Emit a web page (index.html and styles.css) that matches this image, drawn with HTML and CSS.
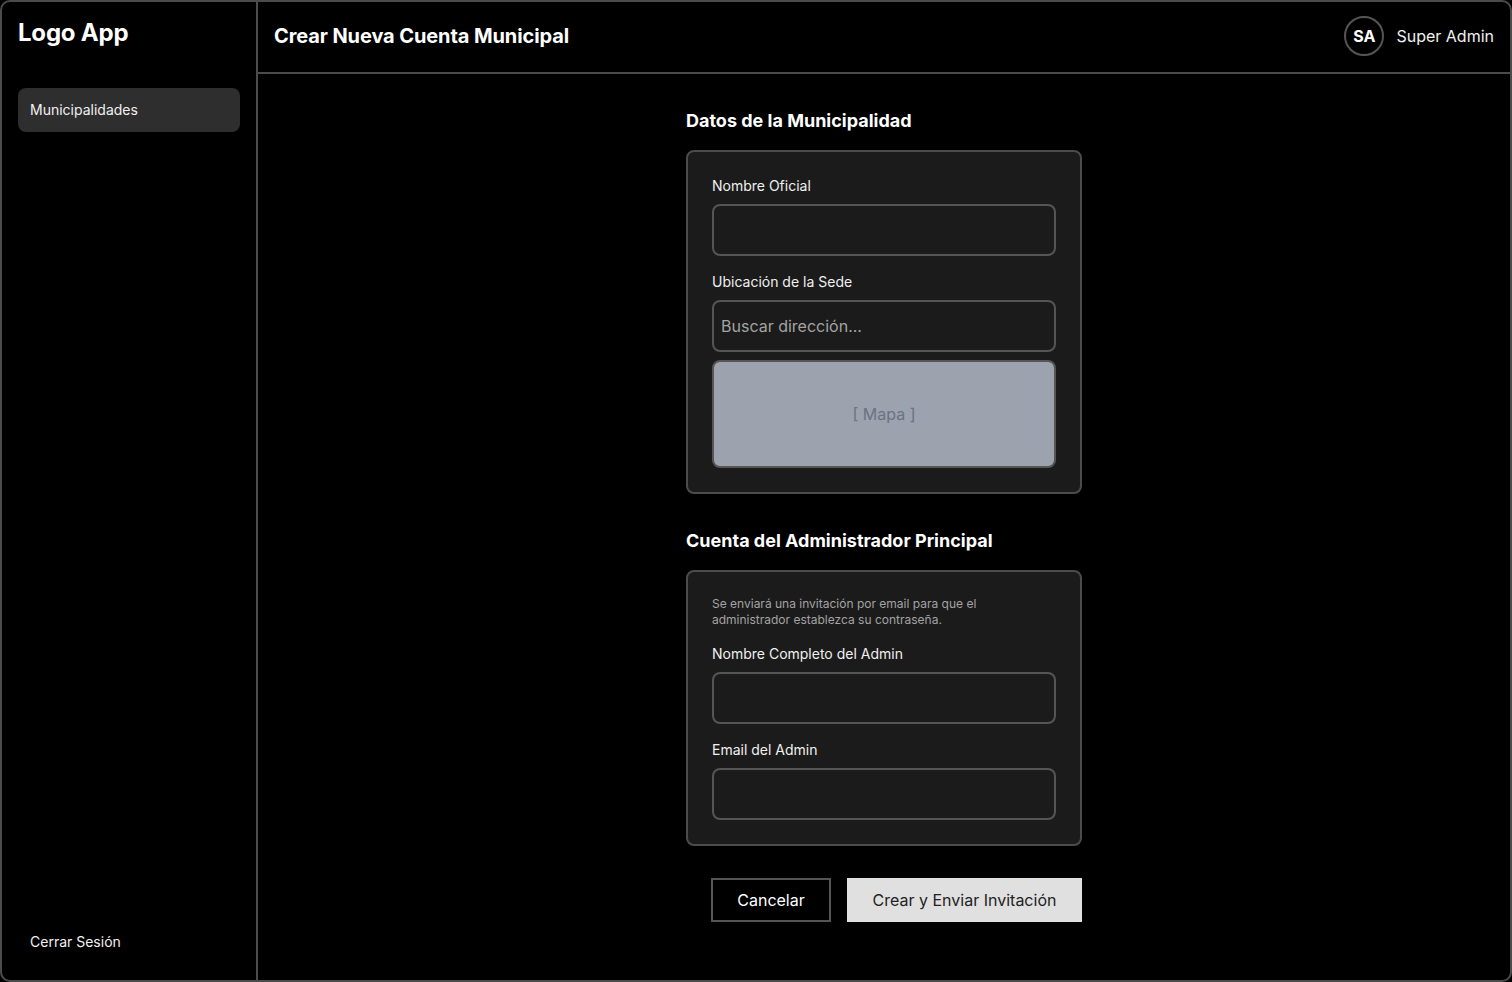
FILE: index.html
```html
<!DOCTYPE html>
<html lang="es">
<head>
<meta charset="utf-8">
<title>Crear Nueva Cuenta Municipal</title>
<link rel="stylesheet" href="styles.css">
</head>
<body>
<div class="app">
  <aside class="sidebar">
    <div class="logo">Logo App</div>
    <nav class="nav">
      <a class="nav-item active">Municipalidades</a>
    </nav>
    <a class="logout">Cerrar Sesión</a>
  </aside>
  <div class="main">
    <header class="header">
      <h1 class="title">Crear Nueva Cuenta Municipal</h1>
      <div class="user">
        <div class="avatar">SA</div>
        <span class="user-name">Super Admin</span>
      </div>
    </header>
    <section class="content">
      <form class="form">
        <h2 class="section-title">Datos de la Municipalidad</h2>
        <div class="card">
          <div class="field">
            <label class="label">Nombre Oficial</label>
            <div class="input"></div>
          </div>
          <div class="field">
            <label class="label">Ubicación de la Sede</label>
            <div class="input"><span class="placeholder">Buscar dirección...</span></div>
            <div class="map">[ Mapa ]</div>
          </div>
        </div>

        <h2 class="section-title second">Cuenta del Administrador Principal</h2>
        <div class="card">
          <p class="hint">Se enviará una invitación por email para que el<br>administrador establezca su contraseña.</p>
          <div class="field">
            <label class="label">Nombre Completo del Admin</label>
            <div class="input"></div>
          </div>
          <div class="field">
            <label class="label">Email del Admin</label>
            <div class="input"></div>
          </div>
        </div>

        <div class="actions">
          <button type="button" class="btn btn-secondary">Cancelar</button>
          <button type="button" class="btn btn-primary">Crear y Enviar Invitación</button>
        </div>
      </form>
    </section>
  </div>
</div>
</body>
</html>
```

FILE: styles.css
```css
* { box-sizing: border-box; }

html, body {
  margin: 0;
  padding: 0;
  background: #000;
}

body {
  font-family: Inter, "Noto Sans", sans-serif;
  color: #fff;
}

.app {
  width: 1512px;
  height: 982px;
  border: 2px solid #4b4b4b;
  border-radius: 10px;
  display: flex;
  overflow: hidden;
  background: #000;
}

/* Sidebar */
.sidebar {
  width: 256px;
  flex: 0 0 256px;
  border-right: 2px solid #4b4b4b;
  padding: 16px 16px 29px 16px;
  display: flex;
  flex-direction: column;
}

.logo {
  font-size: 24px;
  font-weight: 700;
  line-height: 30px;
  letter-spacing: -0.2px;
}

.nav {
  margin-top: 40px;
  flex: 1;
}

.nav-item {
  display: flex;
  align-items: center;
  height: 44px;
  padding: 0 12px 1px 12px;
  border-radius: 8px;
  font-size: 14px;
  color: #f0f0f0;
}

.nav-item.active {
  background: #2e2e2e;
}

.logout {
  font-size: 14px;
  line-height: 18px;
  padding-left: 12px;
  color: #f0f0f0;
}

/* Main */
.main {
  flex: 1;
  display: flex;
  flex-direction: column;
}

.header {
  height: 72px;
  flex: 0 0 72px;
  border-bottom: 2px solid #4b4b4b;
  display: flex;
  align-items: center;
  justify-content: space-between;
  padding: 0 16px 2px 16px;
}

.title {
  margin: 0;
  font-size: 20px;
  font-weight: 700;
  letter-spacing: -0.1px;
}

.user {
  display: flex;
  align-items: center;
  gap: 12px;
}

.avatar {
  width: 40px;
  height: 40px;
  border-radius: 50%;
  border: 2px solid #555;
  display: flex;
  align-items: center;
  justify-content: center;
  font-size: 16px;
  font-weight: 700;
}

.user-name {
  font-size: 16px;
  color: #f0f0f0;
}

.content {
  flex: 1;
  display: flex;
  justify-content: center;
  padding-top: 35px;
}

.form {
  width: 396px;
}

.section-title {
  margin: 0 0 17px 0;
  font-size: 18px;
  line-height: 24px;
  font-weight: 700;
}

.section-title.second {
  margin-top: 35px;
}

.card {
  background: #1b1b1b;
  border: 2px solid #4b4b4b;
  border-radius: 8px;
  padding: 24px;
  display: flex;
  flex-direction: column;
  gap: 16px;
}

.field {
  display: flex;
  flex-direction: column;
}

.label {
  font-size: 14px;
  line-height: 18px;
  padding-top: 1px;
  color: #f0f0f0;
  margin-bottom: 9px;
}

.input {
  height: 52px;
  border: 2px solid #555;
  border-radius: 8px;
  background: #1b1b1b;
  display: flex;
  align-items: center;
  padding: 0 7px 1px 7px;
}

.placeholder {
  font-size: 16px;
  color: #a3a3a3;
}

.map {
  margin-top: 8px;
  height: 108px;
  border: 2px solid #555;
  border-radius: 8px;
  background: #9ca3af;
  color: #6b7280;
  font-size: 16px;
  display: flex;
  align-items: center;
  justify-content: center;
}

.hint {
  margin: 0;
  font-size: 12px;
  line-height: 16px;
  color: #a3a3a3;
}

.actions {
  margin-top: 32px;
  display: flex;
  justify-content: flex-end;
  gap: 16px;
}

.btn {
  height: 44px;
  font-family: Inter, "Noto Sans", sans-serif;
  font-size: 16px;
  border-radius: 0;
  cursor: pointer;
}

.btn-secondary {
  width: 120px;
  background: #000;
  color: #fff;
  border: 2px solid #555;
}

.btn-primary {
  width: 235px;
  background: #e0e0e0;
  color: #222;
  border: none;
}
```
